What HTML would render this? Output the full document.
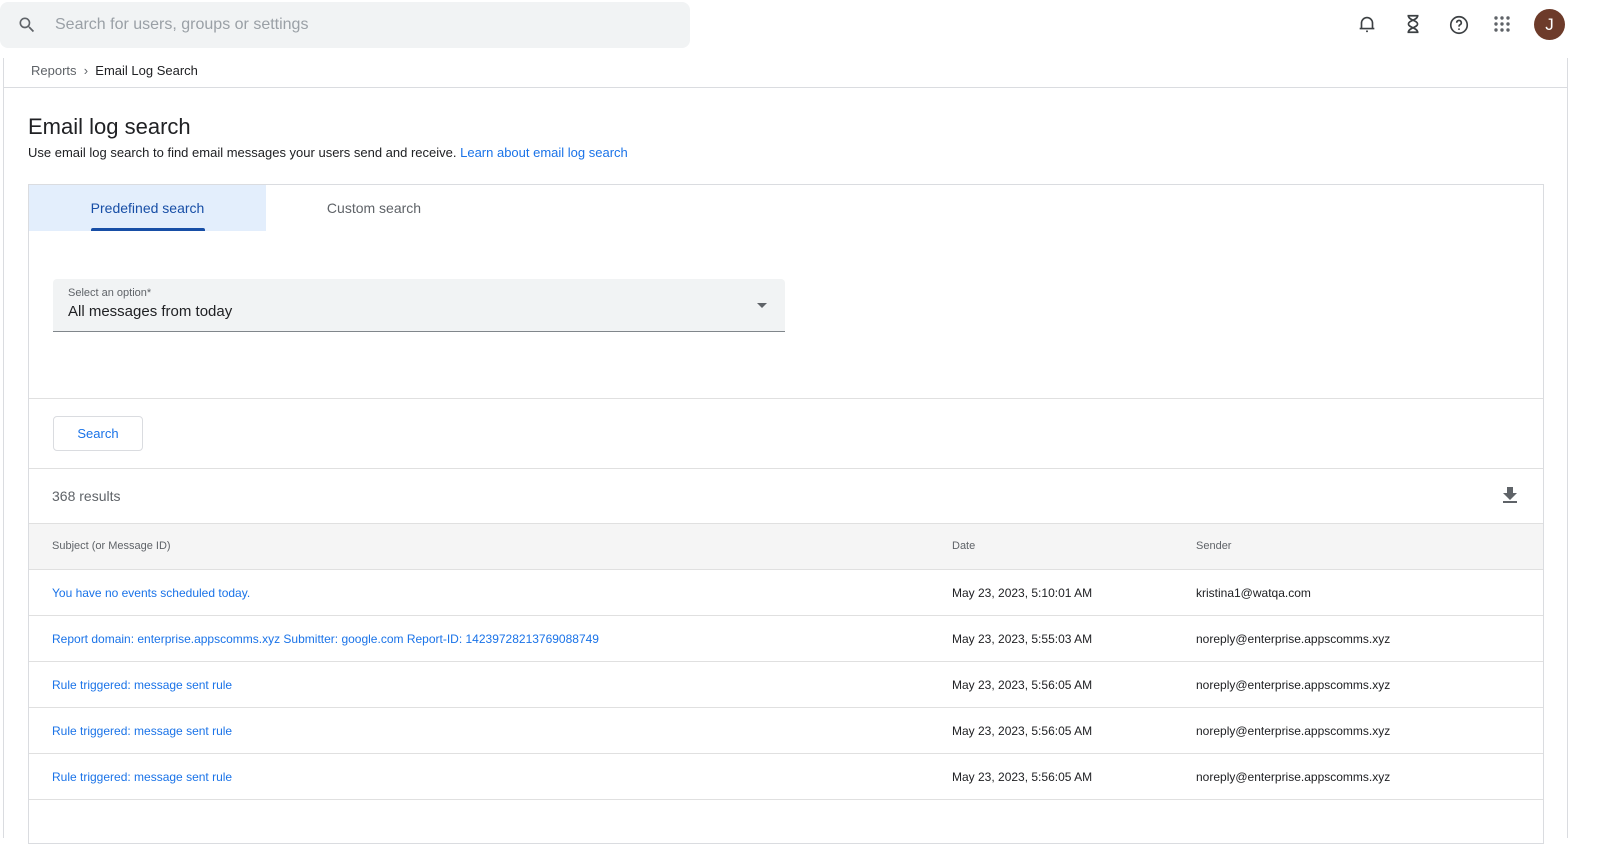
<!DOCTYPE html>
<html><head><style>
*{box-sizing:border-box;margin:0;padding:0}
body{width:1600px;height:827px;overflow:hidden;background:#fff;font-family:"Liberation Sans",Arial,sans-serif;color:#202124;position:relative}
.abs{position:absolute}
.search{left:0;top:2px;width:690px;height:46px;background:#f1f3f4;border-radius:8px}
.search span{position:absolute;left:55px;top:14px;font-size:16px;color:#9aa0a6}
.frame{left:3px;top:58px;width:1565px;height:780px;border-left:1px solid #dadce0;border-right:1px solid #dadce0}
.bc{left:31px;top:63px;font-size:13px;color:#5f6368}
.hr{left:4px;top:87px;width:1563px;height:1px;background:#dadce0}
h1{position:absolute;left:28px;top:114px;font-size:22px;font-weight:400}
.sub{left:28px;top:145px;font-size:13px}
.sub a{color:#1a73e8;text-decoration:none}
.card{left:28px;top:184px;width:1516px;height:660px;border:1px solid #dadce0}
.tab1{left:29px;top:185px;width:237px;height:46px;background:#e3eefc;color:#174ea6;font-size:14px;text-align:center;line-height:46px}
.ul{left:91px;top:228px;width:114px;height:3px;background:#174ea6;border-radius:2px 2px 0 0}
.tab2{left:266px;top:185px;width:216px;height:46px;color:#5f6368;font-size:14px;text-align:center;line-height:46px}
.sel{left:53px;top:279px;width:732px;height:53px;background:#f1f3f4;border-bottom:1px solid #80868b;border-radius:4px 4px 0 0}
.line{height:1px;background:#e0e0e0;left:29px;width:1514px}
.btn{left:53px;top:416px;width:90px;height:35px;border:1px solid #dadce0;border-radius:4px;color:#1a73e8;font-size:13px;text-align:center;line-height:34px}
.thead{left:29px;top:523px;width:1514px;height:47px;background:#f5f5f5;border-top:1px solid #e0e0e0;border-bottom:1px solid #e0e0e0}
.row{position:absolute;left:29px;width:1514px;height:46px;border-bottom:1px solid #e0e0e0;font-size:12px}
.row span{position:absolute;top:16px}
.c1{left:23px;color:#1a73e8}.c2{left:923px}.c3{left:1167px}
</style></head><body>
<div class="abs search"><svg class="abs" style="left:17px;top:13px" width="20" height="20" viewBox="0 0 24 24"><path fill="#5f6368" d="M15.5 14h-.79l-.28-.27A6.47 6.47 0 0 0 16 9.5 6.5 6.5 0 1 0 9.5 16c1.61 0 3.09-.59 4.23-1.57l.27.28v.79l5 4.99L20.49 19l-4.99-5zm-6 0C7.01 14 5 11.99 5 9.5S7.01 5 9.5 5 14 7.01 14 9.5 11.99 14 9.5 14z"/></svg><span>Search for users, groups or settings</span></div>
<svg class="abs" style="left:1356px;top:13px" width="22" height="22" viewBox="0 0 24 24"><path fill="none" stroke="#3c4043" stroke-width="1.8" d="M6 17V11a6 6 0 0 1 12 0v6M4 17h16M11 20h2"/></svg>
<svg class="abs" style="left:1402px;top:13px" width="22" height="22" viewBox="0 0 24 24"><path fill="none" stroke="#3c4043" stroke-width="1.8" d="M6 3h12M6 21h12M7 3c0 5 10 5 10 9s-10 4-10 9M17 3c0 5-10 5-10 9s10 4 10 9"/></svg>
<svg class="abs" style="left:1448px;top:14px" width="22" height="22" viewBox="0 0 24 24"><circle cx="12" cy="12" r="9" fill="none" stroke="#3c4043" stroke-width="1.8"/><path fill="none" stroke="#3c4043" stroke-width="1.8" d="M9.5 9.5a2.5 2.5 0 1 1 3.5 2.3c-.8.4-1 1-1 2"/><circle cx="12" cy="16.5" r="1" fill="#3c4043"/></svg>
<svg class="abs" style="left:1493px;top:15px" width="20" height="20" viewBox="0 0 20 20" fill="#5f6368"><circle cx="3" cy="3" r="1.7"/><circle cx="9" cy="3" r="1.7"/><circle cx="15" cy="3" r="1.7"/><circle cx="3" cy="9" r="1.7"/><circle cx="9" cy="9" r="1.7"/><circle cx="15" cy="9" r="1.7"/><circle cx="3" cy="15" r="1.7"/><circle cx="9" cy="15" r="1.7"/><circle cx="15" cy="15" r="1.7"/></svg>
<div class="abs" style="left:1534px;top:9px;width:31px;height:31px;border-radius:50%;background:#6d3b2a;color:#fff;font-size:17px;text-align:center;line-height:31px">J</div>
<div class="abs frame"></div>
<div class="abs bc">Reports &nbsp;›&nbsp; <span style="color:#202124">Email Log Search</span></div>
<div class="abs hr"></div>
<h1>Email log search</h1>
<div class="abs sub">Use email log search to find email messages your users send and receive. <a>Learn about email log search</a></div>
<div class="abs card"></div>
<div class="abs tab1">Predefined search</div><div class="abs ul"></div>
<div class="abs tab2">Custom search</div>
<div class="abs sel"><div class="abs" style="left:15px;top:8px;font-size:11px;color:#5f6368">Select an option*</div><div class="abs" style="left:15px;top:24px;font-size:15px">All messages from today</div><div class="abs" style="left:704px;top:24px;border:5px solid transparent;border-top-color:#5f6368"></div></div>
<div class="abs line" style="top:398px"></div>
<div class="abs btn">Search</div>
<div class="abs line" style="top:468px"></div>
<div class="abs" style="left:52px;top:488px;font-size:14px;color:#5f6368">368 results</div>
<svg class="abs" style="left:1501px;top:486px" width="18" height="18" viewBox="0 0 18 18"><path fill="#5f6368" d="M6 1h6v6h4l-7 7-7-7h4zM2 15h14v2H2z"/></svg>
<div class="abs thead"><span class="abs" style="left:23px;top:16px;font-size:11px;color:#5f6368">Subject (or Message ID)</span><span class="abs" style="left:923px;top:16px;font-size:11px;color:#5f6368">Date</span><span class="abs" style="left:1167px;top:16px;font-size:11px;color:#5f6368">Sender</span></div>
<div class="row" style="top:570px"><span class="c1">You have no events scheduled today.</span><span class="c2">May 23, 2023, 5:10:01 AM</span><span class="c3">kristina1@watqa.com</span></div>
<div class="row" style="top:616px"><span class="c1">Report domain: enterprise.appscomms.xyz Submitter: google.com Report-ID: 14239728213769088749</span><span class="c2">May 23, 2023, 5:55:03 AM</span><span class="c3">noreply@enterprise.appscomms.xyz</span></div>
<div class="row" style="top:662px"><span class="c1">Rule triggered: message sent rule</span><span class="c2">May 23, 2023, 5:56:05 AM</span><span class="c3">noreply@enterprise.appscomms.xyz</span></div>
<div class="row" style="top:708px"><span class="c1">Rule triggered: message sent rule</span><span class="c2">May 23, 2023, 5:56:05 AM</span><span class="c3">noreply@enterprise.appscomms.xyz</span></div>
<div class="row" style="top:754px"><span class="c1">Rule triggered: message sent rule</span><span class="c2">May 23, 2023, 5:56:05 AM</span><span class="c3">noreply@enterprise.appscomms.xyz</span></div>
</body></html>
